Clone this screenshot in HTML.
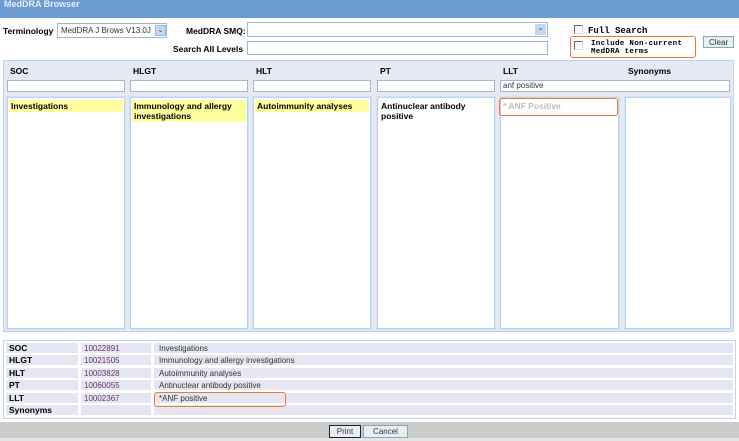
<!DOCTYPE html>
<html><head><meta charset="utf-8"><style>
*{box-sizing:border-box;margin:0;padding:0}
body{width:739px;height:441px;background:#fff;font-family:"Liberation Sans",Arial,sans-serif;font-size:9px;color:#000;position:relative;overflow:hidden}
.a{position:absolute}
.title{left:0;top:0;width:739px;height:18px;background:#6b9bd1;color:#e8eefa;font-weight:bold;font-size:9px;padding:0 4px;line-height:8px}
.lbl{font-weight:bold;font-size:8.5px}
.inp{background:#fff;border:1px solid #9fb6d6}
.panel{border:1px solid #b9d3f3;background:#e6e8f2}
.list{background:#fff;border:1px solid #b9d3f3;outline:1px solid #d6e2f2}
.hl{background:#ffffa0;font-weight:bold;padding:1px 2px;line-height:10px;font-size:8.5px}
.row{position:absolute;left:6px;width:727px;height:10px;background:#e6e6f2}
.row div{position:absolute;top:0;height:10px;line-height:11px;font-size:8px;color:#333}
.orange{border:1.5px solid #f07830;border-radius:3px}
.btn{border:1px solid #8aa;background:#e8eef6;font-size:8px;text-align:center;line-height:11px;color:#333}
</style></head><body>
<div class="a title">MedDRA Browser</div>
<div class="a lbl" style="left:3px;top:26px">Terminology</div>
<div class="a inp" style="left:57px;top:23px;width:110px;height:15px;font-size:8px;line-height:13px;padding-left:3px;color:#333">MedDRA J Brows V13.0J</div>
<div class="a" style="left:155px;top:25px;width:11px;height:11px;background:#c7d6ee;border:1px solid #9fb6d6;font-size:7px;text-align:center;line-height:9px;color:#335">&#8964;</div>
<div class="a lbl" style="left:186px;top:26px">MedDRA SMQ:</div>
<div class="a inp" style="left:247px;top:22px;width:301px;height:15px"></div>
<div class="a" style="left:535px;top:24px;width:11px;height:11px;background:#c7d6ee;font-size:7px;text-align:center;line-height:9px;color:#335">&#8964;</div>
<div class="a lbl" style="left:173px;top:44px">Search All Levels</div>
<div class="a inp" style="left:247px;top:41px;width:301px;height:14px"></div>
<div class="a" style="left:574px;top:25px;width:9px;height:9px;border:1px solid #666;border-right-color:#ddd;border-bottom-color:#ddd"></div>
<div class="a" style="left:588px;top:26px;font-family:'Liberation Mono',monospace;font-size:9px;font-weight:bold">Full Search</div>
<div class="a orange" style="left:570px;top:36px;width:126px;height:22px"></div>
<div class="a" style="left:574px;top:41px;width:9px;height:9px;border:1px solid #666;border-right-color:#ddd;border-bottom-color:#ddd"></div>
<div class="a" style="left:591px;top:40px;font-family:'Liberation Mono',monospace;font-size:7.5px;font-weight:bold;line-height:8px;letter-spacing:0.3px">Include Non-current<br>MedDRA terms</div>
<div class="a btn" style="left:703px;top:36px;width:31px;height:12px">Clear</div>

<div class="a panel" style="left:3px;top:60px;width:731px;height:272px"></div>
<div class="a lbl" style="left:10px;top:66px">SOC</div>
<div class="a lbl" style="left:133px;top:66px">HLGT</div>
<div class="a lbl" style="left:256px;top:66px">HLT</div>
<div class="a lbl" style="left:380px;top:66px">PT</div>
<div class="a lbl" style="left:503px;top:66px">LLT</div>
<div class="a lbl" style="left:628px;top:66px">Synonyms</div>
<div class="a inp" style="left:7px;top:80px;width:118px;height:12px"></div>
<div class="a inp" style="left:130px;top:80px;width:118px;height:12px"></div>
<div class="a inp" style="left:253px;top:80px;width:118px;height:12px"></div>
<div class="a inp" style="left:377px;top:80px;width:118px;height:12px"></div>
<div class="a inp" style="left:500px;top:80px;width:230px;height:12px;font-size:8px;line-height:10px;padding-left:2px;color:#333">anf positive</div>
<div class="a list" style="left:7px;top:97px;width:118px;height:232px"><div class="hl" style="margin:2px 1px">Investigations</div></div>
<div class="a list" style="left:130px;top:97px;width:118px;height:232px"><div class="hl" style="margin:2px 1px">Immunology and allergy investigations</div></div>
<div class="a list" style="left:253px;top:97px;width:118px;height:232px"><div class="hl" style="margin:2px 1px">Autoimmunity analyses</div></div>
<div class="a list" style="left:377px;top:97px;width:118px;height:232px"><div style="margin:2px 1px;padding:1px 2px;line-height:10px;font-weight:bold;font-size:8.5px">Antinuclear antibody positive</div></div>
<div class="a list" style="left:500px;top:97px;width:119px;height:232px"></div>
<div class="a list" style="left:625px;top:97px;width:106px;height:232px"></div>
<div class="a orange" style="left:499px;top:98px;width:119px;height:18px"></div>
<div class="a" style="left:503px;top:101px;color:#bbb;font-weight:bold;font-size:8.5px">* ANF Positive</div>

<div class="a" style="left:3px;top:340px;width:733px;height:79px;border:1px solid #b9d3f3;background:#fff"></div>
<div class="row" style="top:343px"><div style="left:3px;font-weight:bold;color:#000;font-size:8.5px">SOC</div><div style="left:78px;color:#636">10022891</div><div style="left:153px">Investigations</div></div>
<div class="row" style="top:355px"><div style="left:3px;font-weight:bold;color:#000;font-size:8.5px">HLGT</div><div style="left:78px;color:#636">10021505</div><div style="left:153px">Immunology and allergy investigations</div></div>
<div class="row" style="top:368px"><div style="left:3px;font-weight:bold;color:#000;font-size:8.5px">HLT</div><div style="left:78px;color:#636">10003828</div><div style="left:153px">Autoimmunity analyses</div></div>
<div class="row" style="top:380px"><div style="left:3px;font-weight:bold;color:#000;font-size:8.5px">PT</div><div style="left:78px;color:#636">10060055</div><div style="left:153px">Antinuclear antibody positive</div></div>
<div class="row" style="top:393px"><div style="left:3px;font-weight:bold;color:#000;font-size:8.5px">LLT</div><div style="left:78px;color:#636">10002367</div><div style="left:153px">*ANF positive</div></div>
<div class="row" style="top:405px"><div style="left:3px;font-weight:bold;color:#000;font-size:8.5px">Synonyms</div></div>
<div class="a" style="left:78px;top:343px;width:3px;height:73px;background:#fff"></div>
<div class="a" style="left:151px;top:343px;width:3px;height:73px;background:#fff"></div>
<div class="a orange" style="left:154px;top:392px;width:132px;height:15px"></div>

<div class="a" style="left:0;top:422px;width:739px;height:16px;background:#cbcbcb"></div>
<div class="a" style="left:0;top:438px;width:739px;height:3px;background:#e4e4e4"></div>
<div class="a btn" style="left:329px;top:425px;width:32px;height:13px;border:1px solid #223">Print</div>
<div class="a btn" style="left:363px;top:425px;width:45px;height:13px">Cancel</div>
</body></html>
